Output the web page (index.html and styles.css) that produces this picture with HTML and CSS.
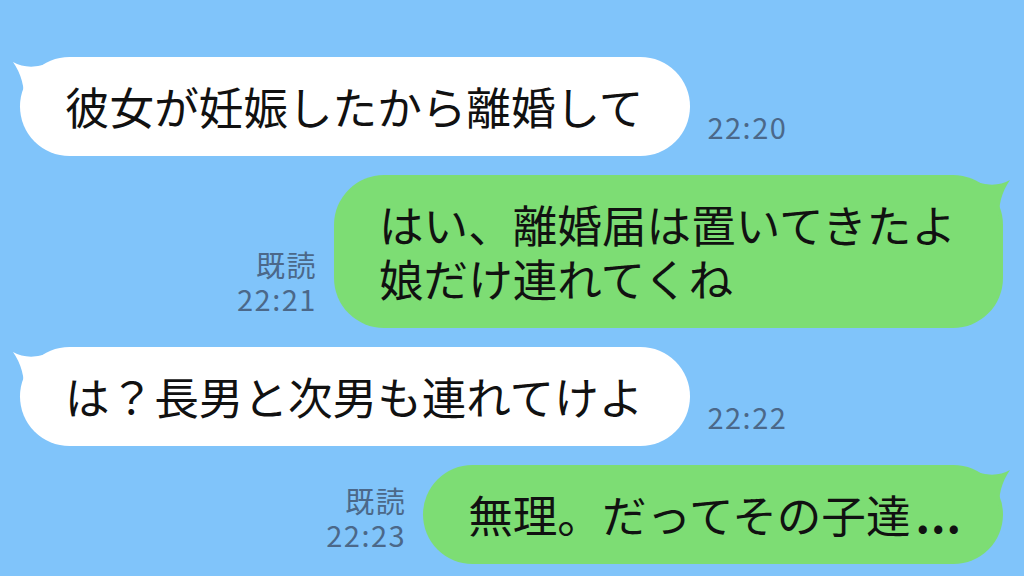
FILE: index.html
```html
<!DOCTYPE html>
<html lang="ja">
<head>
    <meta charset="utf-8">
    <title>トーク</title>
    <link rel="stylesheet" href="styles.css">
</head>
<body>
    <div class="chat">
        <div class="row in">
            <div class="bubble white">
                <svg class="tail" viewBox="0 0 50 50" width="50" height="50"><path d="M3 5 Q22 16 52 1 L52 45 L14 45 Q15 22 3 5 Z"/></svg>
                彼女が妊娠したから離婚して
            </div>
            <div class="meta">22:20</div>
        </div>
        <div class="row out">
            <div class="meta"><span>既読</span><span>22:21</span></div>
            <div class="bubble green">
                <svg class="tail" viewBox="0 0 50 50" width="50" height="50"><path d="M3 5 Q22 16 52 1 L52 45 L14 45 Q15 22 3 5 Z"/></svg>
                はい、離婚届は置いてきたよ<br>娘だけ連れてくね
            </div>
        </div>
        <div class="row in">
            <div class="bubble white">
                <svg class="tail" viewBox="0 0 50 50" width="50" height="50"><path d="M3 5 Q22 16 52 1 L52 45 L14 45 Q15 22 3 5 Z"/></svg>
                は？長男と次男も連れてけよ
            </div>
            <div class="meta">22:22</div>
        </div>
        <div class="row out">
            <div class="meta"><span>既読</span><span>22:23</span></div>
            <div class="bubble green">
                <svg class="tail" viewBox="0 0 50 50" width="50" height="50"><path d="M3 5 Q22 16 52 1 L52 45 L14 45 Q15 22 3 5 Z"/></svg>
                無理。だってその子達<span class="dots">...</span>
            </div>
        </div>
    </div>
</body>
</html>
```

FILE: styles.css
```css
html, body { margin: 0; height: 100%; }
body { background: #80c4fa; font-family: "Noto Sans CJK JP", "Noto Sans", sans-serif; color: #111; overflow: hidden; }
.chat { display: flex; flex-direction: column; gap: 19px; padding: 57px 21px 0 20px; }
.row { display: flex; align-items: flex-end; gap: 17px; }
.row.out { justify-content: flex-end; }
.bubble { position: relative; font-size: 44.6px; line-height: 54px; padding: 22px 47px 23px 45px; border-radius: 50px; white-space: nowrap; }
.bubble.white { background: #fff; }
.bubble.green { background: #7ddd74; }
.dots { font-weight: bold; letter-spacing: 1px; margin-left: 5px; margin-right: -6px; }
.tail { position: absolute; top: 0; overflow: visible; }
.white .tail { left: -10px; fill: #fff; }
.green .tail { right: -10px; fill: #7ddd74; transform: scaleX(-1); }
.meta { display: flex; flex-direction: column; align-items: flex-end; margin-bottom: 13px; font-size: 29px; line-height: 34px; letter-spacing: 1.5px; color: #4b6889; }
```
